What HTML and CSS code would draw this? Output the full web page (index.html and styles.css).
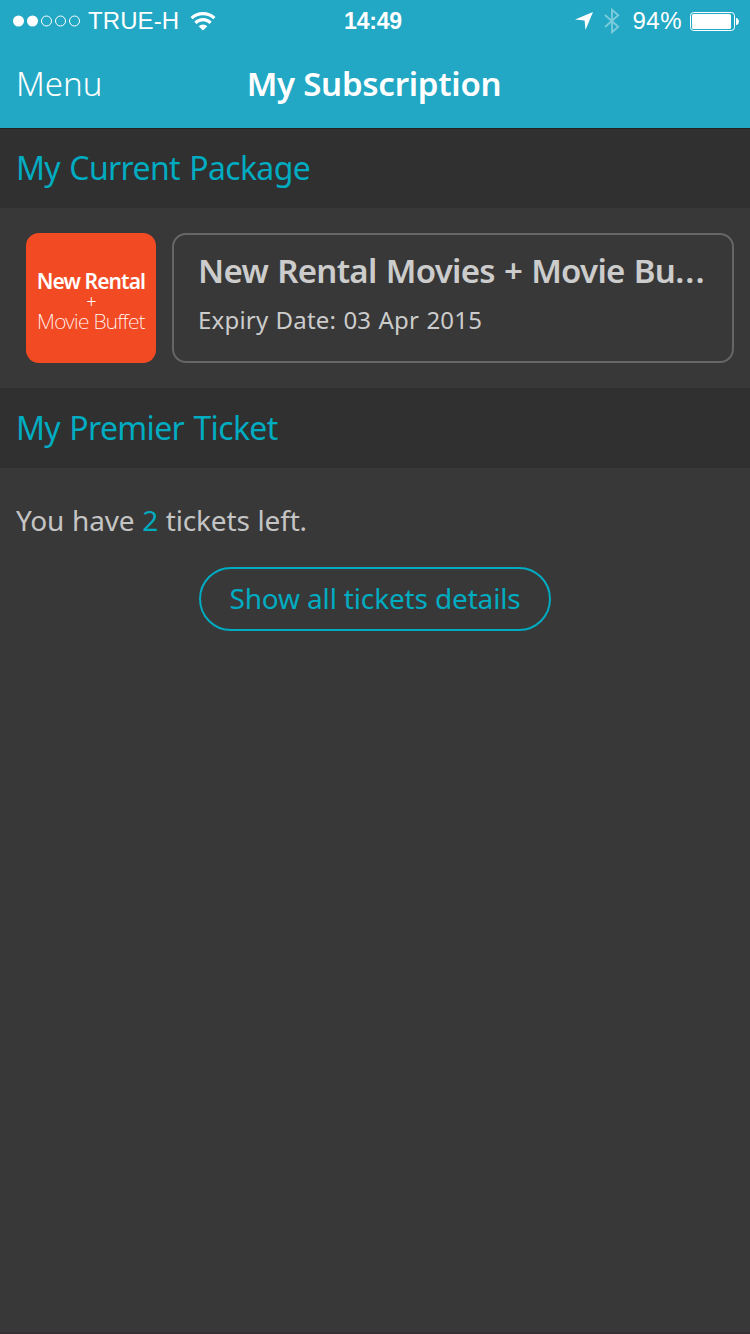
FILE: index.html
```
<!DOCTYPE html>
<html lang="en">
<head>
  <meta charset="UTF-8" />
  <meta name="viewport" content="width=device-width, initial-scale=1.0"/>
  <title>My Subscription</title>
  <link rel="stylesheet" href="styles.css">
</head>
<body>

<header class="top">
  <div class="status">
    <div class="status-left">
      <svg class="signal" width="68" height="12" viewBox="0 0 68 12">
        <g fill="#fff"><circle cx="5.5" cy="6" r="5.5"/><circle cx="19.5" cy="6" r="5.5"/></g>
        <g fill="none" stroke="#fff"><circle cx="33.5" cy="6" r="5"/><circle cx="47.5" cy="6" r="5"/><circle cx="61.5" cy="6" r="5"/></g>
      </svg>
      <span class="carrier">TRUE-H</span>
      <svg class="wifi" width="26" height="19" viewBox="0 0 26 19">
        <g fill="none" stroke="#fff" stroke-width="3.1">
          <path d="M1.6 6.2a16.4 16.4 0 0 1 22.8 0"/>
          <path d="M5.4 10.8a10.8 10.8 0 0 1 15.2 0"/>
        </g>
        <path d="M8.7 14.2a6.2 6.2 0 0 1 8.6 0L13 18.6z" fill="#fff"/>
      </svg>
    </div>
    <div class="clock">14:49</div>
    <div class="status-right">
      <svg class="location" width="18" height="18" viewBox="0 0 18 18">
        <path d="M18 0L10.5 18L9.6 8.4L0 7.5z" fill="#fff"/>
      </svg>
      <svg class="bluetooth" width="16" height="26" viewBox="0 0 16 26">
        <path d="M1 7L14.2 18.8L8 24.2V1.8L14.2 7.2L1 19" fill="none" stroke="#fff" stroke-width="1.9"/>
      </svg>
      <span class="percent">94%</span>
      <svg class="battery" width="49" height="19" viewBox="0 0 49 19">
        <rect x=".5" y=".5" width="44" height="18" rx="3.2" fill="none" stroke="#fff"/>
        <rect x="2" y="2" width="39" height="15" rx="1.5" fill="#fff"/>
        <path d="M46 6h1q2 1.5 2 3.5t-2 3.5h-1z" fill="#fff"/>
      </svg>
    </div>
  </div>
  <div class="nav">
    <a class="menu">Menu</a>
    <h1>My Subscription</h1>
  </div>
</header>

<h2 class="heading current">My Current Package</h2>
<div class="package">
  <div class="thumb">
    <b>New Rental</b>
    <span class="plus">+</span>
    <span class="buffet">Movie Buffet</span>
  </div>
  <div class="info">
    <div class="name">New Rental Movies + Movie Bu<span class="dots">...</span></div>
    <div class="expiry">Expiry Date: 03 Apr 2015</div>
  </div>
</div>

<h2 class="heading premier">My Premier Ticket</h2>
<div class="tickets">
  <p>You have <span class="count">2</span> tickets left.</p>
  <button class="details">Show all tickets details</button>
</div>

</body>
</html>
```
FILE: styles.css
```
* {
  box-sizing: border-box;
}
body {
  margin: 0;
  height: 1334px;
  background: #383838;
  border-bottom: 2px solid #352f33;
  color: #ccc;
  font-family: "Noto Sans", sans-serif;
  overflow: hidden;
  white-space: nowrap;
}
h1, h2, p {
  margin: 0;
}
svg {
  display: block;
}

/* status bar + navigation */
.top {
  height: 128px;
  background: #22a8c4;
  color: #fff;
}
.status {
  display: grid;
  grid-template-columns: 1fr auto 1fr;
  height: 40px;
  padding: 0 11px 0 13px;
  font-family: "Liberation Sans", sans-serif;
  font-size: 24px;
  line-height: 42px;
}
.status-left, .status-right {
  display: flex;
  align-items: center;
}
.status-right {
  justify-content: flex-end;
}
.carrier {
  margin-left: 7px;
  letter-spacing: 0.1px;
}
.wifi {
  margin-left: 11px;
}
.clock {
  padding-right: 6px;
  font-weight: bold;
  font-size: 23px;
  letter-spacing: -0.2px;
}
.bluetooth {
  margin-left: 11px;
  opacity: 0.4;
}
.percent {
  margin: 0 8px 0 12px;
  letter-spacing: 0.5px;
}
.nav {
  display: grid;
  grid-template-columns: 1fr auto 1fr;
  padding: 0 16px;
  line-height: 88px;
}
.menu {
  font-size: 33px;
  font-weight: 300;
}
.nav h1 {
  padding-right: 2px;
  font-size: 33px;
  font-weight: 600;
  letter-spacing: -0.25px;
}

.heading {
  height: 80px;
  padding-left: 16px;
  background: #303030;
  color: #00acc1;
  font-size: 32px;
  font-weight: 400;
  line-height: 80px;
  letter-spacing: -0.65px;
  word-spacing: 1.6px;
}
.current {
  border-top: 1px solid #222;
  line-height: 78px;
}

/* current package */
.package {
  display: flex;
  gap: 16px;
  height: 180px;
  padding: 25px 16px 25px 26px;
}
.thumb {
  display: flex;
  flex-direction: column;
  align-items: center;
  width: 130px;
  height: 130px;
  padding-top: 36px;
  border-radius: 13px;
  background: #f24b24;
  color: #fff;
  font-size: 21px;
  line-height: 24px;
  letter-spacing: -0.7px;
}
.thumb b {
  font-weight: 600;
  letter-spacing: -0.9px;
}
.plus {
  font-size: 18px;
  font-weight: 300;
  line-height: 16px;
}
.buffet {
  font-weight: 200;
  line-height: 25px;
}
.info {
  flex: 1;
  min-width: 0;
  height: 130px;
  padding: 13px 24px;
  border: 2px solid #666;
  border-radius: 14px;
}
.name {
  font-size: 33px;
  font-weight: 600;
  line-height: 46px;
  letter-spacing: -0.7px;
  word-spacing: 1.2px;
}
.dots {
  letter-spacing: 1px;
}
.expiry {
  margin-top: 9px;
  font-size: 24px;
  font-weight: 400;
  line-height: 34px;
  letter-spacing: 0.2px;
  word-spacing: 0.8px;
}

/* premier tickets */
.tickets {
  display: flex;
  flex-direction: column;
  padding: 32px 16px;
}
.tickets p {
  color: #c4c4c4;
  font-size: 28px;
  line-height: 41px;
  letter-spacing: -0.15px;
  word-spacing: 0.6px;
}
.count {
  color: #00acc1;
}
.details {
  align-self: center;
  width: 352px;
  height: 64px;
  margin-top: 26px;
  padding: 0 0 2px;
  border: 2px solid #00acc1;
  border-radius: 32px;
  background: none;
  color: #00acc1;
  font: 28px/58px "Noto Sans", sans-serif;
  letter-spacing: -0.15px;
}
```
